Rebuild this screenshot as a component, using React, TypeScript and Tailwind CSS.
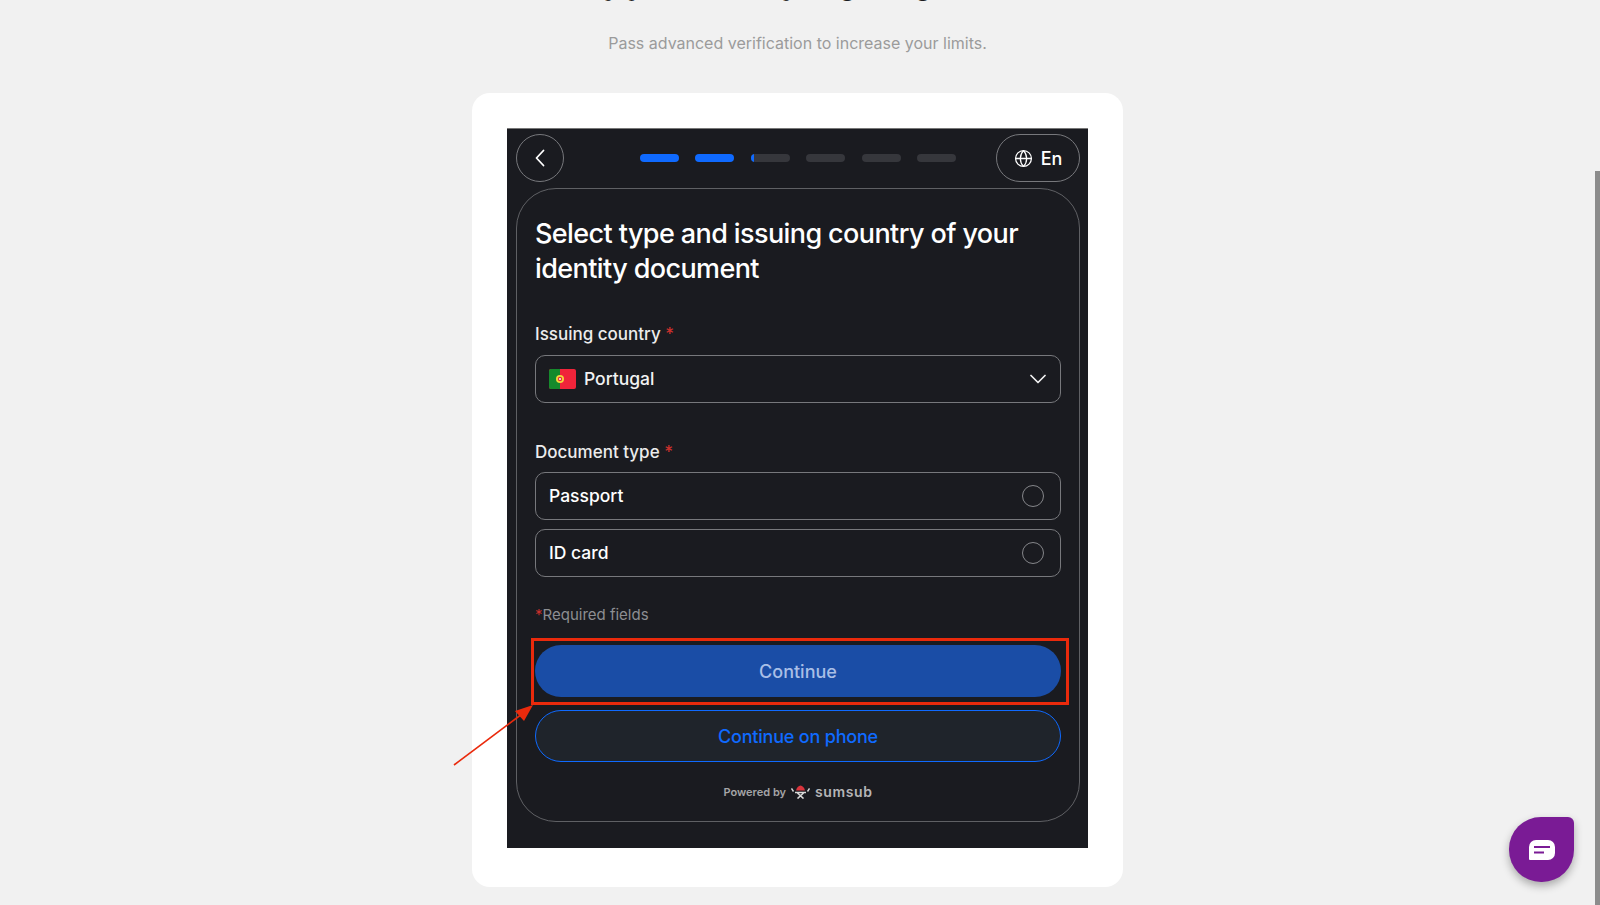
import { Globe } from "lucide-react";

const steps = ["bg-[#0f6aff]", "bg-[#0f6aff]", "partial", "", "", ""];

function Flag() {
  return (
    <svg width="27" height="20" viewBox="0 0 27 20" className="shrink-0">
      <rect width="27" height="20" rx="2" fill="#f0243a" />
      <path d="M2 0h9v20H2a2 2 0 0 1-2-2V2a2 2 0 0 1 2-2z" fill="#148a2c" />
      <circle cx="11" cy="10" r="4" fill="#f4d63a" />
      <circle cx="11" cy="10" r="2.2" fill="#e8283c" />
      <circle cx="11" cy="10" r="1.1" fill="#f3f3f3" />
    </svg>
  );
}

function SumsubMark() {
  return (
    <svg width="19" height="14" viewBox="0 0 19 14" fill="none">
      <path d="M5 5.500c.6-2.600 2.500-5 4.500-5s3.900 2.400 4.500 5z" fill="#d8343c" />
      <path d="M4 7.500h11M6.500 8l6 5.500M12.500 8l-6 5.500" stroke="#d8d8d8" strokeWidth="1.6" />
      <path d="M.5 3.500l2 3M18.500 3.500l-2 3" stroke="#d8d8d8" strokeWidth="1.4" />
    </svg>
  );
}

function Radio({ label }: { label: string }) {
  return (
    <div className="flex h-[48px] items-center justify-between rounded-[10px] border border-[#77787c] pl-[13px] pr-[16px] text-[17.500px] font-medium text-white">
      {label}
      <span className="h-[22px] w-[22px] rounded-full border border-[#85868a]" />
    </div>
  );
}

export default function App() {
  return (
    <div className="relative h-[905px] overflow-hidden bg-[#f1f1f1] font-['Inter',sans-serif]">
      <div className="flex flex-col items-center pr-[5px]">
        <h1 className="-mt-[31px] h-[32px] text-[28px] leading-[32px] font-semibold text-[#1a1b20]">
          Verify your identity to get higher limits
        </h1>
        <p className="mt-[30px] text-[16px] leading-[24px] text-[#9b9b9b]">
          Pass advanced verification to increase your limits.
        </p>

        {/* white card */}
        <div className="mt-[38px] h-[794px] w-[651px] rounded-[18px] bg-white px-[35px] pt-[35px]">
          <div className="relative h-[720px] w-[581px] border-t border-[#777] bg-[#1a1b20] pl-[9px] pr-[8px] pt-[5px]">
            {/* top bar */}
            <div className="flex h-[48px] items-center justify-between">
              <div className="flex h-[48px] w-[48px] items-center justify-center rounded-full border border-[#77787c] text-white">
                <svg width="12" height="18" viewBox="0 0 12 18" fill="none" stroke="currentColor" strokeWidth="1.800" strokeLinecap="round" strokeLinejoin="round">
                  <path d="M9.500 1.500L2.500 9l7 7.500" />
                </svg>
              </div>
              <div className="ml-[36px] flex gap-[16.500px]">
                {steps.map((step, i) => (
                  <div key={i} className={`h-[8px] w-[39px] overflow-hidden rounded-full ${step && step !== "partial" ? step : "bg-[#36373c]"}`}>
                    {step === "partial" && <div className="h-full w-[3px] bg-[#0f6aff]" />}
                  </div>
                ))}
              </div>
              <div className="flex h-[48px] w-[84px] items-center justify-center gap-[8px] rounded-full border border-[#77787c] text-[18px] font-medium text-white">
                <Globe size={19} strokeWidth={1.6} />
                En
              </div>
            </div>

            {/* panel */}
            <div className="mt-[6px] h-[634px] rounded-[40px] border border-[#5f6064] px-[18px] pt-[27px]">
              <h2 className="w-[510px] text-[27px] leading-[35px] font-medium tracking-[-0.6px] text-white">
                Select type and issuing country of your identity document
              </h2>

              <div className="mt-[36px] text-[17px] leading-[24px] font-medium text-[#ececec]">
                Issuing country <span className="text-[#c9302c]">*</span>
              </div>
              <div className="mt-[9px] flex h-[48px] items-center justify-between rounded-[10px] border border-[#77787c] pl-[13px] pr-[14px] text-[17.500px] font-medium text-[#f2f2f2]">
                <div className="flex items-center gap-[8px]">
                  <Flag />
                  Portugal
                </div>
                <svg width="16" height="10" viewBox="0 0 16 10" fill="none" stroke="currentColor" strokeWidth="1.700" strokeLinecap="round" strokeLinejoin="round">
                  <path d="M1 1.500l7 7 7-7" />
                </svg>
              </div>

              <div className="mt-[37px] text-[17px] leading-[24px] font-medium text-[#ececec]">
                Document type <span className="text-[#c9302c]">*</span>
              </div>
              <div className="mt-[8px] flex flex-col gap-[9px]">
                <Radio label="Passport" />
                <Radio label="ID card" />
              </div>

              <div className="mt-[26px] text-[15px] leading-[24px] text-[#8d8e92]">
                <span className="text-[#c9302c]">*</span>Required fields
              </div>

              <div className="mt-[18px] flex h-[52px] items-center justify-center rounded-full bg-[#1a4da6] text-[18px] font-medium text-[#a9bfe6]">
                Continue
              </div>
              <div className="mt-[13px] flex h-[52px] items-center justify-center rounded-full border border-[#0f6aff] bg-[#1f242b] text-[18px] font-medium tracking-[-0.2px] text-[#0f6aff]">
                Continue on phone
              </div>

              <div className="mt-[22px] flex items-center justify-center gap-[5px]">
                <span className="text-[11px] font-semibold text-[#a5a5a7]">Powered by</span>
                <SumsubMark />
                <span className="text-[14px] leading-[16px] font-semibold tracking-[0.6px] text-[#b5b5b7]">sumsub</span>
              </div>
            </div>
          </div>
        </div>
      </div>

      {/* annotation drawn over the page */}
      <div className="absolute left-[531px] top-[638px] h-[67px] w-[538px] border-[3px] border-[#ea2a0c]" />
      <svg className="absolute left-[450px] top-[700px]" width="90" height="70" viewBox="0 0 90 70" fill="none">
        <path d="M4 65L76 11" stroke="#ea2a0c" strokeWidth="1.6" />
        <path d="M83 5L74 21L65 11z" fill="#ea2a0c" />
      </svg>

      {/* chat launcher */}
      <div className="absolute left-[1509px] top-[817px] flex h-[65px] w-[65px] items-center justify-center rounded-[32px] rounded-tr-[6px] bg-[#7a1b95] shadow-[0_4px_8px_rgba(0,0,0,0.3)]">
        <svg width="26" height="20" viewBox="0 0 26 20">
          <path d="M7 0h12a7 7 0 0 1 7 7v6a7 7 0 0 1-7 7H1a1 1 0 0 1-1-1V7a7 7 0 0 1 7-7z" fill="#fff" />
          <path d="M5 7h16M5 12.500h10" stroke="#7a1b95" strokeWidth="1.800" />
        </svg>
      </div>

      {/* scrollbar thumb */}
      <div className="absolute right-0 top-[171px] h-[734px] w-[5px] bg-[#8c8c8c]" />
    </div>
  );
}
